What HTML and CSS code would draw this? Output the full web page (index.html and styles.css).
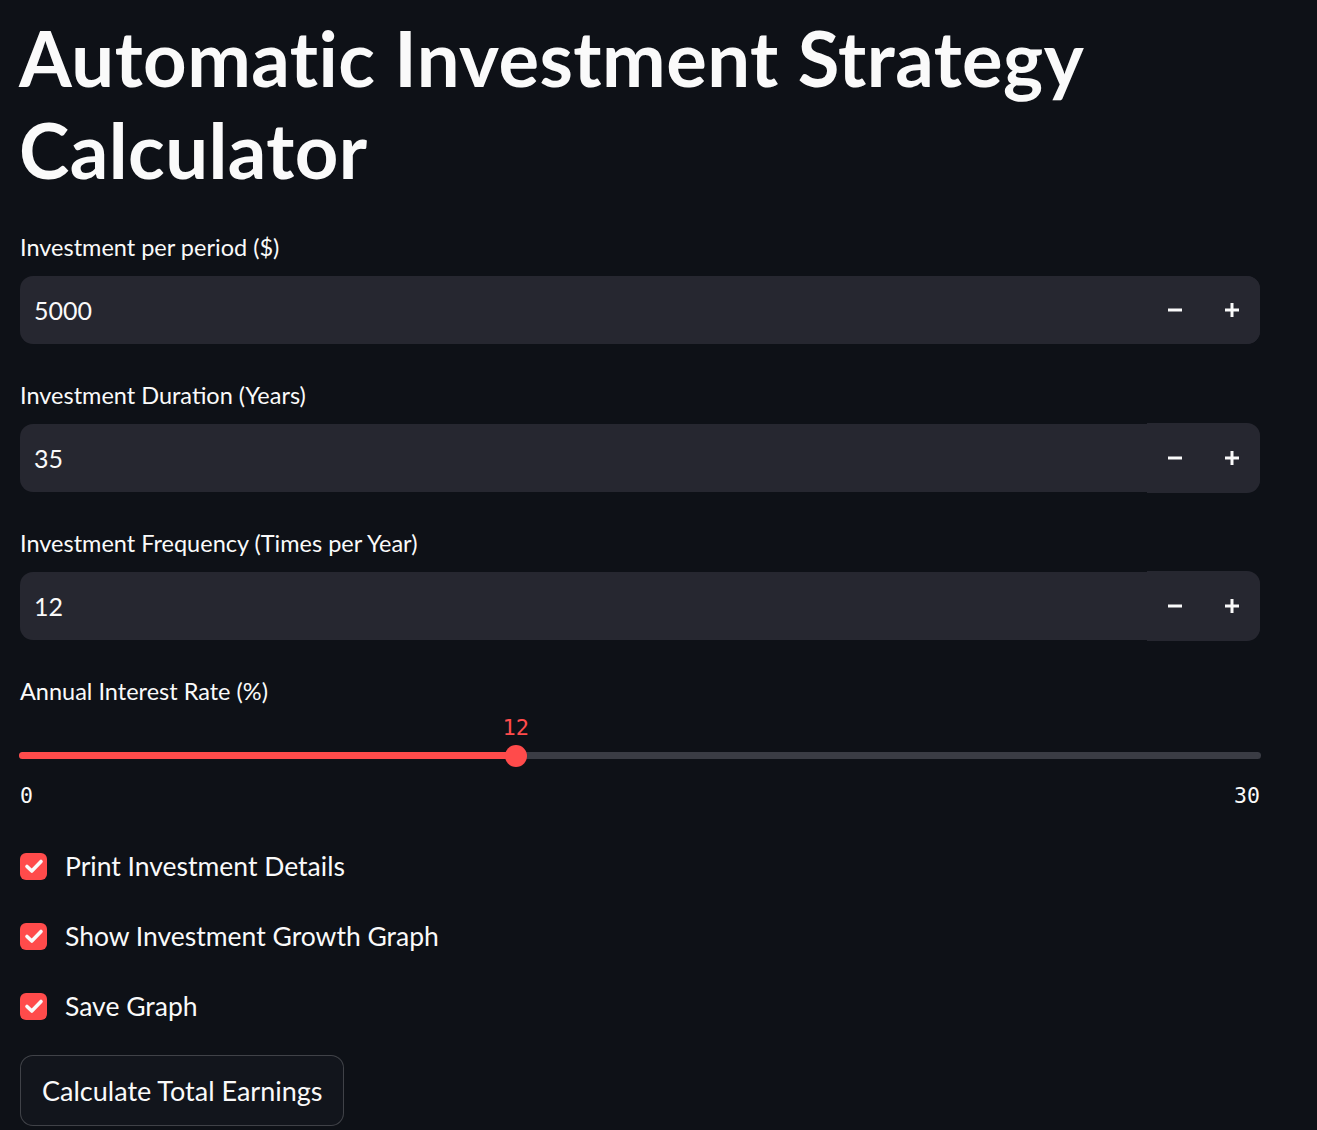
FILE: index.html
```html
<!DOCTYPE html>
<html lang="en">
<head>
<meta charset="utf-8">
<title>Automatic Investment Strategy Calculator</title>
<link rel="stylesheet" href="styles.css">
</head>
<body>
<main class="app">
  <h1 class="title">Automatic Investment Strategy<br>Calculator</h1>

  <div class="field">
    <div class="label">Investment per period ($)</div>
    <div class="numinput">
      <div class="numinput-value">5000</div>
      <div class="steps">
        <span class="step"><svg width="14" height="14" viewBox="0 0 14 14"><rect x="0" y="5.5" width="14" height="3" fill="#fafafa"/></svg></span>
        <span class="step"><svg width="14" height="14" viewBox="0 0 14 14"><rect x="0" y="5.5" width="14" height="3" fill="#fafafa"/><rect x="5.5" y="0" width="3" height="14" fill="#fafafa"/></svg></span>
      </div>
    </div>
  </div>

  <div class="field">
    <div class="label">Investment Duration (Years)</div>
    <div class="numinput">
      <div class="numinput-value">35</div>
      <div class="steps steps-raised">
        <span class="step"><svg width="14" height="14" viewBox="0 0 14 14"><rect x="0" y="5.5" width="14" height="3" fill="#fafafa"/></svg></span>
        <span class="step"><svg width="14" height="14" viewBox="0 0 14 14"><rect x="0" y="5.5" width="14" height="3" fill="#fafafa"/><rect x="5.5" y="0" width="3" height="14" fill="#fafafa"/></svg></span>
      </div>
    </div>
  </div>

  <div class="field">
    <div class="label">Investment Frequency (Times per Year)</div>
    <div class="numinput">
      <div class="numinput-value">12</div>
      <div class="steps steps-raised">
        <span class="step"><svg width="14" height="14" viewBox="0 0 14 14"><rect x="0" y="5.5" width="14" height="3" fill="#fafafa"/></svg></span>
        <span class="step"><svg width="14" height="14" viewBox="0 0 14 14"><rect x="0" y="5.5" width="14" height="3" fill="#fafafa"/><rect x="5.5" y="0" width="3" height="14" fill="#fafafa"/></svg></span>
      </div>
    </div>
  </div>

  <div class="slider-field">
    <div class="label">Annual Interest Rate (%)</div>
    <div class="slider">
      <div class="track">
        <div class="track-fill" style="width: 40%"></div>
        <div class="thumb" style="left: 40%">
          <span class="thumb-value">12</span>
        </div>
      </div>
      <div class="slider-range">
        <span>0</span>
        <span>30</span>
      </div>
    </div>
  </div>

  <div class="checks">
    <label class="check">
      <span class="box"><svg width="26" height="26" viewBox="0 0 26 26"><path d="M6 13.5 L10.8 18 L20 8.5" fill="none" stroke="#fafafa" stroke-width="3.6" stroke-linecap="round" stroke-linejoin="round"/></svg></span>
      <span class="check-text">Print Investment Details</span>
    </label>
    <label class="check">
      <span class="box"><svg width="26" height="26" viewBox="0 0 26 26"><path d="M6 13.5 L10.8 18 L20 8.5" fill="none" stroke="#fafafa" stroke-width="3.6" stroke-linecap="round" stroke-linejoin="round"/></svg></span>
      <span class="check-text">Show Investment Growth Graph</span>
    </label>
    <label class="check">
      <span class="box"><svg width="26" height="26" viewBox="0 0 26 26"><path d="M6 13.5 L10.8 18 L20 8.5" fill="none" stroke="#fafafa" stroke-width="3.6" stroke-linecap="round" stroke-linejoin="round"/></svg></span>
      <span class="check-text">Save Graph</span>
    </label>
  </div>

  <button class="btn" type="button">Calculate Total Earnings</button>
</main>
</body>
</html>
```

FILE: styles.css
```css
* { box-sizing: border-box; }

html, body {
  margin: 0;
  padding: 0;
  background: #0e1117;
  color: #fafafa;
  font-family: "Lato", "Noto Sans", "Liberation Sans", sans-serif;
}

.app {
  width: 1260px;
  padding: 0 0 0 20px;
  display: flex;
  flex-direction: column;
}

.title {
  margin: 12px 0 0 -1px;
  font-size: 76px;
  line-height: 92px;
  font-weight: 700;
  letter-spacing: 0.45px;
}

.field {
  display: flex;
  flex-direction: column;
  margin-top: 36px;
}
.field + .field { margin-top: 36px; }

.label {
  font-size: 23.5px;
  line-height: 30px;
  height: 30px;
}

.numinput {
  margin-top: 14px;
  height: 68px;
  display: flex;
  align-items: stretch;
  background: #262730;
  border-radius: 13px;
}

.numinput-value {
  flex: 1;
  display: flex;
  align-items: center;
  padding-left: 14px;
  font-size: 25px;
}

.steps {
  width: 113px;
  display: flex;
  border-radius: 0 13px 13px 0;
  background: #262730;
}
.steps-raised {
  margin: -1px 0;
}

.step {
  flex: 1;
  display: flex;
  align-items: center;
  justify-content: center;
}
.step svg { display: block; }

.slider-field {
  margin-top: 36px;
  display: flex;
  flex-direction: column;
}

.slider {
  padding-top: 46px;
}

.track {
  position: relative;
  height: 7px;
  margin: 0 -1px;
  border-radius: 4px;
  background: #3a3c44;
}

.track-fill {
  height: 100%;
  background: #ff4b4b;
  border-radius: 4px 0 0 4px;
}

.thumb {
  position: absolute;
  top: 50%;
  width: 22px;
  height: 22px;
  margin: -11px 0 0 -11px;
  border-radius: 50%;
  background: #ff4b4b;
}

.thumb-value {
  position: absolute;
  bottom: 27px;
  left: 50%;
  transform: translateX(-50%);
  color: #ff4b4b;
  font-family: "DejaVu Sans Mono", "Liberation Mono", monospace;
  font-size: 22px;
  line-height: 24px;
}

.slider-range {
  display: flex;
  justify-content: space-between;
  margin-top: 25px;
  font-family: "DejaVu Sans Mono", "Liberation Mono", monospace;
  font-size: 21.5px;
  line-height: 24px;
}

.checks {
  display: flex;
  flex-direction: column;
  gap: 36px;
  margin-top: 41px;
}

.check {
  display: flex;
  align-items: center;
  height: 34px;
}

.box {
  width: 27px;
  height: 27px;
  border-radius: 6px;
  background: #ff4b4b;
  flex: none;
  display: flex;
  align-items: center;
  justify-content: center;
}
.box svg { display: block; }

.check-text {
  margin-left: 18px;
  font-size: 26.5px;
}

.btn {
  align-self: flex-start;
  margin-top: 32px;
  height: 71px;
  padding: 0 21px;
  background: #12151c;
  color: #fafafa;
  border: 1px solid rgba(250, 250, 250, 0.2);
  border-radius: 13px;
  font-family: inherit;
  font-size: 27px;
}
```
